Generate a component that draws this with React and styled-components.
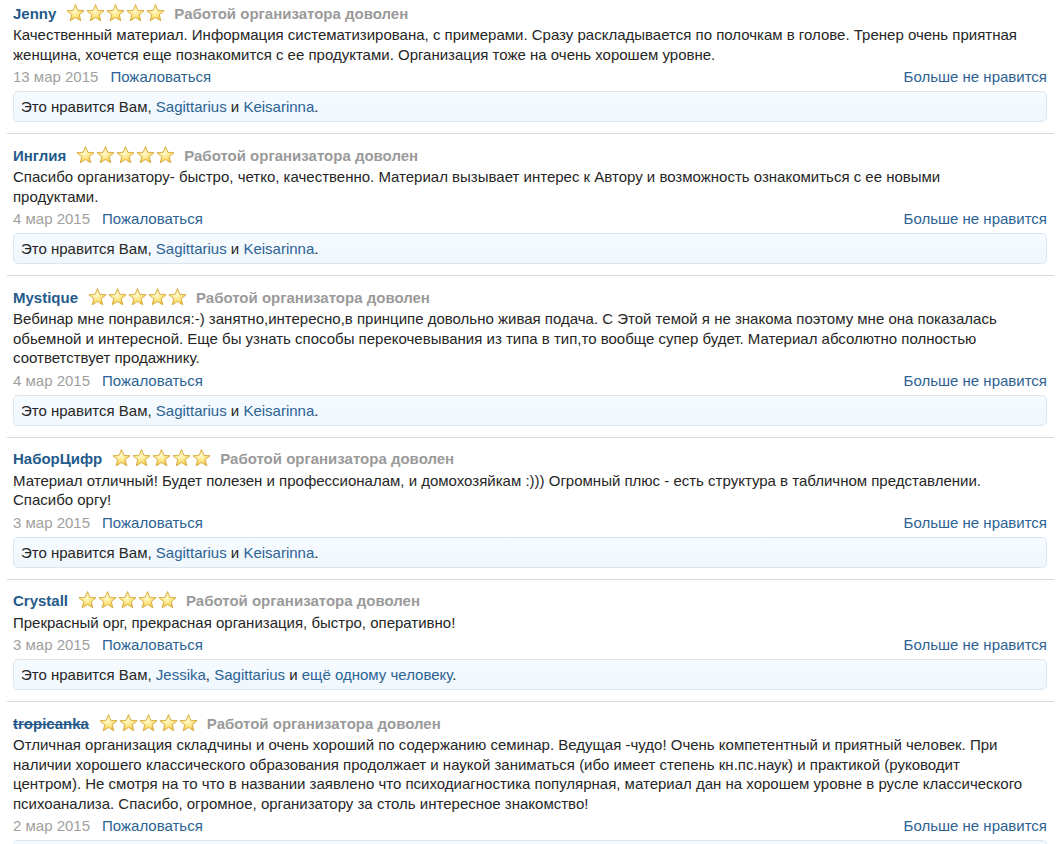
import React from 'react';
import styled, { createGlobalStyle } from 'styled-components';

const GlobalStyle = createGlobalStyle`
    body {
        margin: 0;
        background: #fff;
        font-family: "Liberation Sans", Arial, sans-serif;
        font-size: 15px;
        color: #262626;
    }
`;

// lines are kept as in the original wrapping
const reviews = [
    {
        name: 'Jenny',
        text: [
            'Качественный материал. Информация систематизирована, с примерами. Сразу раскладывается по полочкам в голове. Тренер очень приятная',
            'женщина, хочется еще познакомится с ее продуктами. Организация тоже на очень хорошем уровне.',
        ],
        date: '13 мар 2015',
        likes: ['Sagittarius', 'Keisarinna'],
    },
    {
        name: 'Инглия',
        text: [
            'Спасибо организатору- быстро, четко, качественно. Материал вызывает интерес к Автору и возможность ознакомиться с ее новыми',
            'продуктами.',
        ],
        date: '4 мар 2015',
        likes: ['Sagittarius', 'Keisarinna'],
    },
    {
        name: 'Mystique',
        text: [
            'Вебинар мне понравился:-) занятно,интересно,в принципе довольно живая подача. С Этой темой я не знакома поэтому мне она показалась',
            'обьемной и интересной. Еще бы узнать способы перекочевывания из типа в тип,то вообще супер будет. Материал абсолютно полностью',
            'соответствует продажнику.',
        ],
        date: '4 мар 2015',
        likes: ['Sagittarius', 'Keisarinna'],
    },
    {
        name: 'НаборЦифр',
        text: [
            'Материал отличный! Будет полезен и профессионалам, и домохозяйкам :))) Огромный плюс - есть структура в табличном представлении.',
            'Спасибо оргу!',
        ],
        date: '3 мар 2015',
        likes: ['Sagittarius', 'Keisarinna'],
    },
    {
        name: 'Crystall',
        text: ['Прекрасный орг, прекрасная организация, быстро, оперативно!'],
        date: '3 мар 2015',
        likes: ['Jessika', 'Sagittarius'],
        more: 'ещё одному человеку',
    },
    {
        name: 'tropicanka',
        banned: true,
        text: [
            'Отличная организация складчины и очень хороший по содержанию семинар. Ведущая -чудо! Очень компетентный и приятный человек. При',
            'наличии хорошего классического образования продолжает и наукой заниматься (ибо имеет степень кн.пс.наук) и практикой (руководит',
            'центром). Не смотря на то что в названии заявлено что психодиагностика популярная, материал дан на хорошем уровне в русле классического',
            'психоанализа. Спасибо, огромное, организатору за столь интересное знакомство!',
        ],
        date: '2 мар 2015',
        likes: ['Sagittarius', 'Keisarinna'],
    },
];

function Star() {
    return (
        <StarSvg viewBox="0 0 20 20">
            <defs>
                <radialGradient id="starFill" cx="45%" cy="40%" r="65%">
                    <stop offset="0%" stopColor="#fffbd0" />
                    <stop offset="55%" stopColor="#fbe27a" />
                    <stop offset="100%" stopColor="#e9b637" />
                </radialGradient>
            </defs>
            <polygon
                points="10,0.6 12.47,6.6 19.03,7.06 13.99,11.3 15.58,17.69 10,14.2 4.42,17.69 6.01,11.3 0.97,7.06 7.53,6.6"
                fill="url(#starFill)"
                stroke="#d3a43a"
                strokeWidth="0.9"
                strokeLinejoin="round"
            />
        </StarSvg>
    );
}

function Likes({ names, more }) {
    return (
        <LikeBox>
            Это нравится Вам,{' '}
            {more ? (
                <>
                    <Link href="#">{names[0]}</Link>, <Link href="#">{names[1]}</Link> и{' '}
                    <Link href="#">{more}</Link>.
                </>
            ) : (
                <>
                    <Link href="#">{names[0]}</Link> и <Link href="#">{names[1]}</Link>.
                </>
            )}
        </LikeBox>
    );
}

export default function App() {
    return (
        <>
            <GlobalStyle />
            <List>
                {reviews.map((r) => (
                    <Item key={r.name}>
                        <Header>
                            <Name href="#" $banned={r.banned}>{r.name}</Name>
                            <Stars>
                                {[0, 1, 2, 3, 4].map((i) => <Star key={i} />)}
                            </Stars>
                            <Verdict>Работой организатора доволен</Verdict>
                        </Header>
                        <Body>
                            {r.text.map((line, i) => <Line key={i}>{line}</Line>)}
                        </Body>
                        <Meta>
                            <div>
                                <DateText>{r.date}</DateText>
                                <Link href="#">Пожаловаться</Link>
                            </div>
                            <Link href="#">Больше не нравится</Link>
                        </Meta>
                        <Likes names={r.likes} more={r.more} />
                    </Item>
                ))}
            </List>
        </>
    );
}

const List = styled.ol`
    list-style: none;
    margin: 0 0 0 7px;
    padding: 0;
    width: 1047px;
`;

const Item = styled.li`
    border-top: 1px solid #d3d9e2;
    padding: 11px 7px 11px 6px;
    &:first-child {
        border-top: none;
        padding-top: 3px;
    }
`;

const Header = styled.div`
    display: flex;
    align-items: center;
    height: 20px;
`;

const Name = styled.a`
    font-weight: bold;
    color: #245a8a;
    text-decoration: ${(p) => (p.$banned ? 'line-through' : 'none')};
`;

const Stars = styled.span`
    display: inline-flex;
    align-items: center;
    margin: 0 9px 0 10px;
    gap: 1px;
`;

const StarSvg = styled.svg`
    width: 19px;
    height: 19px;
    display: block;
`;

const Verdict = styled.span`
    font-weight: bold;
    color: #9a9a9a;
`;

const Body = styled.div`
    margin-top: 2px;
    line-height: 19.5px;
`;

const Line = styled.span`
    display: block;
    white-space: nowrap;
`;

const Meta = styled.div`
    display: flex;
    justify-content: space-between;
    margin-top: 3px;
    line-height: 19px;
`;

const DateText = styled.span`
    color: #a0a0a0;
    margin-right: 12px;
`;

const Link = styled.a`
    color: #2c6394;
    text-decoration: none;
`;

const LikeBox = styled.div`
    margin-top: 5px;
    height: 29px;
    box-sizing: content-box;
    line-height: 29px;
    padding: 0 7px;
    border: 1px solid #d9e7f3;
    border-radius: 5px;
    background: linear-gradient(to bottom, #f6fbff, #eff7fd);
`;
